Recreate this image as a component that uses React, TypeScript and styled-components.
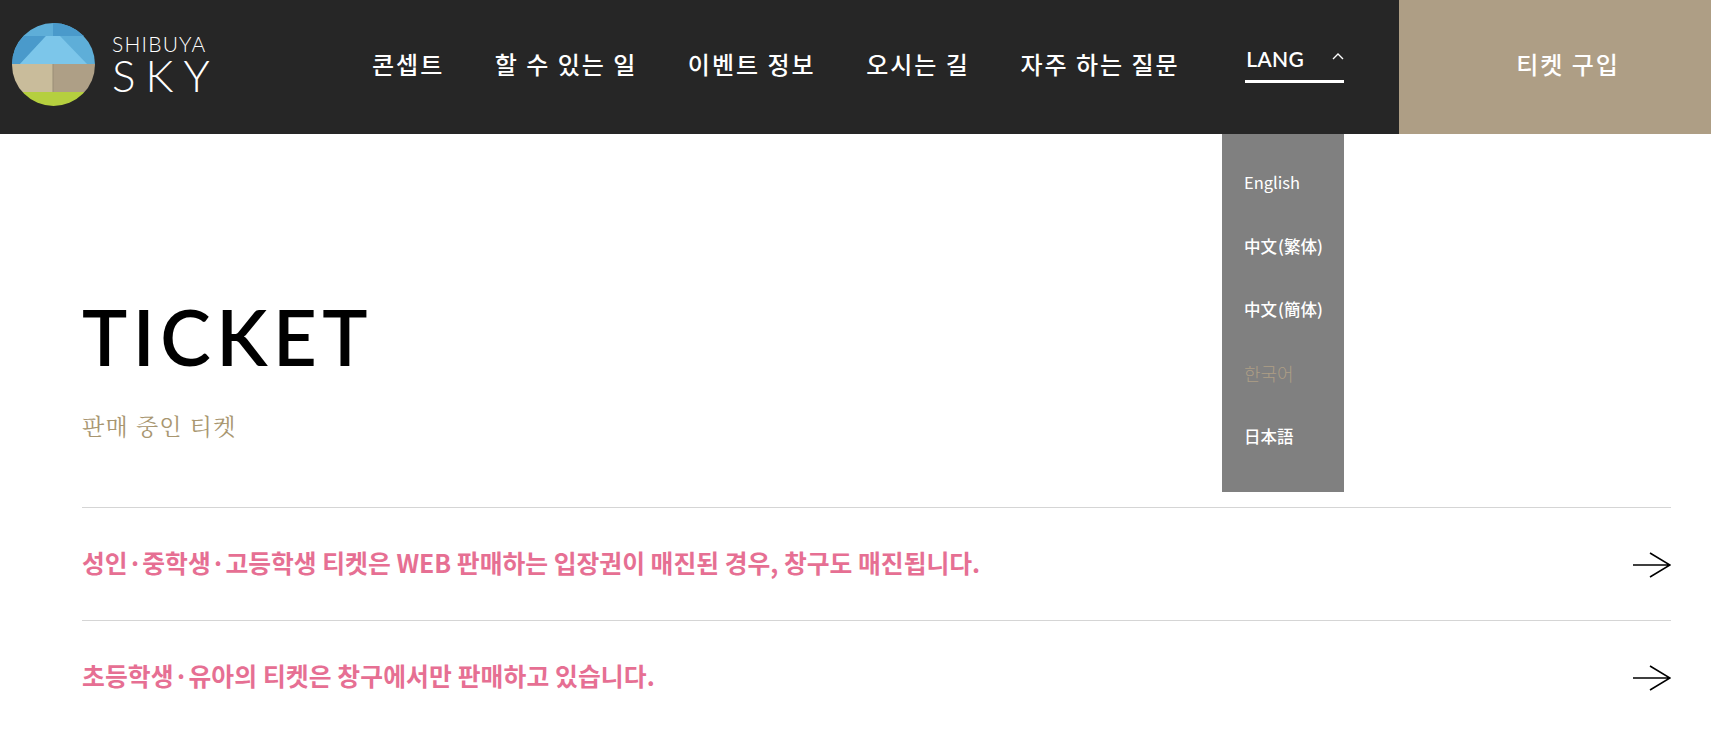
import React from 'react'
import styled, { createGlobalStyle } from 'styled-components'

const Global = createGlobalStyle`
  html, body { margin: 0; padding: 0; background: #fff; overflow: hidden; }
  * { box-sizing: border-box; }
  body { font-family: "Noto Sans CJK KR", "Noto Sans", sans-serif; }
`

const Page = styled.div`
  position: relative;
  width: 1711px;
  height: 732px;
  overflow: hidden;
`

const Header = styled.header`
  display: flex;
  align-items: center;
  height: 134px;
  background: #262626;
`

const Brand = styled.div`
  display: flex;
  align-items: center;
  gap: 17px;
  flex-shrink: 0;
  width: 360px;
  padding: 0 0 5px 12px;
`

const BrandText = styled.div`
  display: flex;
  flex-direction: column;
  gap: 1px;
  color: #fff;
  font-family: Lato, sans-serif;
  font-weight: 300;
`

const BrandTop = styled.span`
  font-size: 21px;
  line-height: 20px;
  letter-spacing: 1.2px;
`

const BrandBottom = styled.span`
  font-size: 44px;
  line-height: 40px;
  letter-spacing: 10px;
`

const Nav = styled.nav`
  display: flex;
  align-items: center;
  flex-shrink: 0;
  gap: 50.5px;
  width: 1000px;
  padding: 0 0 7px 12px;
`

const NavItem = styled.a`
  color: #fff;
  font-size: 24px;
  font-weight: 500;
  letter-spacing: 2px;
  white-space: nowrap;
`

const LangToggle = styled.div`
  display: flex;
  align-items: flex-start;
  justify-content: space-between;
  flex-shrink: 0;
  width: 99px;
  height: 36px;
  margin: 2px 0 0 15px;
  padding: 0 0 0 1px;
  border-bottom: 3px solid #fff;
  color: #fff;
  font-family: Lato, sans-serif;
  font-size: 21px;
  font-weight: 600;
  line-height: 24px;
  letter-spacing: 0.3px;
`

const BuyButton = styled.a`
  display: flex;
  align-items: center;
  justify-content: center;
  width: 312px;
  height: 134px;
  margin-left: auto;
  padding: 0 0 7px 26px;
  background: #ae9e85;
  color: #fff;
  font-size: 24px;
  font-weight: 500;
  letter-spacing: 2px;
`

const LangMenu = styled.ul`
  position: absolute;
  top: 134px;
  left: 1222px;
  display: flex;
  flex-direction: column;
  width: 122px;
  height: 358px;
  margin: 0;
  padding: 17.5px 0 0 22px;
  background: #808080;
  list-style: none;
`

const LangItem = styled.li<{ $active?: boolean; $latin?: boolean }>`
  height: 63.4px;
  color: ${p => (p.$active ? '#ae9e85' : '#fff')};
  font-size: ${p => (p.$active ? 18 : 16.5)}px;
  font-weight: ${p => (p.$active ? 300 : p.$latin ? 400 : 500)};
  line-height: ${p => (p.$latin ? 61 : 63)}px;
  white-space: nowrap;
`

const Content = styled.main`
  padding: 159px 40px 0 82px;
`

const Title = styled.h1`
  margin: 0;
  color: #000;
  font-family: Lato, sans-serif;
  font-size: 76px;
  font-weight: 600;
  line-height: 88px;
  letter-spacing: 5.5px;
`

const Subtitle = styled.p`
  margin: 28px 0 0;
  color: #a89670;
  font-family: "Noto Serif CJK KR", "Noto Serif KR", "Noto Sans CJK KR", serif;
  font-size: 23px;
  line-height: 34px;
  letter-spacing: 1.2px;
`

const Notices = styled.div`
  margin-top: 64px;
`

const Notice = styled.a`
  display: flex;
  align-items: center;
  justify-content: space-between;
  height: 113px;
  border-top: 1px solid #d5d5d5;
  color: #e66f93;
  font-size: 24.8px;
  font-weight: 700;
`

const NoticeText = styled.span<{ $spaced?: boolean }>`
  padding-bottom: 4px;
  letter-spacing: ${p => (p.$spaced ? '0.1px' : '0')};
`

const ArrowIcon = styled.svg`
  margin-top: 1px;
`

const Arrow = () => (
  <ArrowIcon width="38" height="26" viewBox="0 0 38 26" fill="none" stroke="#000" strokeWidth="1.6">
    <path d="M0 13H37M17 1L37 13L17 25" />
  </ArrowIcon>
)

const Logo = () => (
  <svg width="83" height="83" viewBox="0 0 83 83">
    <defs>
      <clipPath id="logo-circle">
        <circle cx="41.5" cy="41.5" r="41.5" />
      </clipPath>
    </defs>
    <g clipPath="url(#logo-circle)">
      <rect width="83" height="41" fill="#5eaed8" />
      <path d="M41 0H83V13H41Z" fill="#4a9acb" />
      <path d="M0 13H34L8 41H0Z" fill="#4a9acb" />
      <path d="M34 13H48L75 41H8Z" fill="#7cc6ea" />
      <rect y="41" width="41" height="28" fill="#c9bc9b" />
      <rect x="41" y="41" width="42" height="28" fill="#ae9f86" />
      <rect x="40.5" y="41" width="1" height="28" fill="#9a8d76" />
      <rect y="69" width="83" height="14" fill="#b5cf3f" />
    </g>
  </svg>
)

const navItems = ['콘셉트', '할 수 있는 일', '이벤트 정보', '오시는 길', '자주 하는 질문']

const langs = ['English', '中文\u200A(繁体)', '中文\u200A(簡体)', '한국어', '日本語']

export default function App() {
  return (
    <Page>
      <Global />
      <Header>
        <Brand>
          <Logo />
          <BrandText>
            <BrandTop>SHIBUYA</BrandTop>
            <BrandBottom>SKY</BrandBottom>
          </BrandText>
        </Brand>
        <Nav>
          {navItems.map(item => (
            <NavItem key={item}>{item}</NavItem>
          ))}
          <LangToggle>
            LANG
            <svg width="12" height="20" viewBox="0 0 12 20" fill="none" stroke="#fff" strokeWidth="1.4">
              <path d="M1 12L6 7L11 12" />
            </svg>
          </LangToggle>
        </Nav>
        <BuyButton>티켓 구입</BuyButton>
      </Header>
      <LangMenu>
        {langs.map(l => (
          <LangItem key={l} $active={l === '한국어'} $latin={l === 'English'}>
            {l}
          </LangItem>
        ))}
      </LangMenu>
      <Content>
        <Title>TICKET</Title>
        <Subtitle>판매 중인 티켓</Subtitle>
        <Notices>
          <Notice>
            <NoticeText>성인·중학생·고등학생 티켓은 WEB 판매하는 입장권이 매진된 경우, 창구도 매진됩니다.</NoticeText>
            <Arrow />
          </Notice>
          <Notice>
            <NoticeText $spaced>초등학생·유아의 티켓은 창구에서만 판매하고 있습니다.</NoticeText>
            <Arrow />
          </Notice>
        </Notices>
      </Content>
    </Page>
  )
}
